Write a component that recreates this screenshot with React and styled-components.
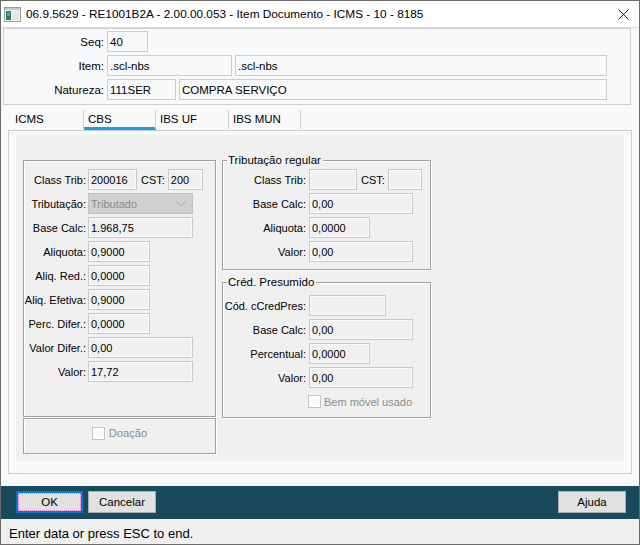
import styled, { createGlobalStyle } from "styled-components";

const GlobalStyle = createGlobalStyle`
    html, body {
        margin: 0;
        padding: 0;
        background: #ffffff;
    }
    body {
        font-family: "Liberation Sans", Arial, sans-serif;
        color: #000;
    }
`;

const Window = styled.div`
    width: 640px;
    height: 545px;
    box-sizing: border-box;
    border: 1px solid #6a6a6a;
    display: flex;
    flex-direction: column;
    background: #f8f9fb;
    overflow: hidden;
`;

const TitleBar = styled.div`
    height: 26px;
    flex-shrink: 0;
    background: #ffffff;
    border-bottom: 1px solid #dcdcdc;
    display: flex;
    align-items: center;
    padding: 0 10px 0 3px;
`;

const TitleText = styled.div`
    flex: 1;
    margin-left: 5px;
    font-size: 11.8px;
    color: #000;
    white-space: nowrap;
`;

const Main = styled.div`
    flex: 1;
    display: flex;
    flex-direction: column;
    padding: 0 7px 0 2px;
`;

const HeaderBox = styled.div`
    height: 77px;
    box-sizing: border-box;
    margin-right: 1px;
    border: 1px solid #cfcfcf;
    padding: 2px 0 4px 0;
    display: flex;
    flex-direction: column;
    gap: 3px;
`;

const HeaderRow = styled.div`
    display: flex;
    align-items: center;
    gap: 3px;
`;

const HeaderLabel = styled.div`
    width: 100px;
    text-align: right;
    font-size: 11.5px;
`;

const HeaderInput = styled.div`
    width: ${(p) => p.$w}px;
    height: 21px;
    box-sizing: border-box;
    border: 1px solid #cdcdcd;
    background: #f8f9fb;
    padding-left: 2px;
    font-size: 11.5px;
    display: flex;
    align-items: center;
`;

const TabRow = styled.div`
    height: 25px;
    display: flex;
    padding-left: 8px;
`;

const Tab = styled.div`
    width: ${(p) => p.$w}px;
    box-sizing: border-box;
    position: relative;
    padding: 8px 0 0 4px;
    font-size: 11.5px;
    box-shadow: ${(p) => (p.$active ? "inset 0 -3px 0 #179fe3" : "none")};

    &::after {
        content: "";
        position: absolute;
        right: 0;
        top: 5px;
        width: 1px;
        height: 19px;
        background: #d4d4d4;
    }
`;

const ContentBox = styled.div`
    height: 344px;
    box-sizing: border-box;
    margin-left: 5px;
    border: 1px solid #cfcfcf;
    padding: 4px 7px 12px 7px;
`;

const Panel = styled.div`
    height: 100%;
    background: #f0f0f0;
    display: flex;
    align-items: flex-start;
    gap: 6px;
    padding-left: 7px;
    font-size: 11px;
`;

const Column = styled.div`
    width: ${(p) => p.$w}px;
    margin-top: ${(p) => p.$top}px;
    display: flex;
    flex-direction: column;
`;

const EtchedBox = styled.div`
    box-sizing: border-box;
    height: ${(p) => p.$h}px;
    margin-top: ${(p) => p.$mt || 0}px;
    border: 1px solid #a0a0a0;
    box-shadow: inset 1px 1px 0 #ffffff, 1px 1px 0 #ffffff;
    padding: ${(p) => p.$pad || "0"};
    display: flex;
    flex-direction: column;
    gap: 3px;
`;

const CenterBox = styled(EtchedBox)`
    flex-direction: row;
    align-items: center;
    justify-content: center;
    gap: 4px;
    color: #8d8d8d;
    font-size: 11.2px;
`;

const Group = styled.fieldset`
    margin: ${(p) => p.$mt || 0}px 0 0 0;
    padding: ${(p) => p.$pt}px 0 ${(p) => p.$pb}px 0;
    border: 1px solid #a0a0a0;
    box-shadow: inset 1px 1px 0 #ffffff, 1px 1px 0 #ffffff;
    min-width: 0;
    display: flex;
    flex-direction: column;
    gap: 3px;
`;

const Legend = styled.legend`
    margin-left: 4px;
    padding: 0 2px 0 1px;
    font-size: 11.5px;
    line-height: 14px;
`;

const FieldRow = styled.div`
    display: flex;
    align-items: center;
    height: 21px;
`;

const FieldLabel = styled.div`
    width: ${(p) => p.$w}px;
    margin-right: ${(p) => p.$gap}px;
    text-align: right;
    white-space: nowrap;
`;

const InlineLabel = styled.div`
    margin: 0 3px 0 4px;
`;

const Field = styled.div`
    width: ${(p) => p.$w}px;
    height: 21px;
    box-sizing: border-box;
    border: 1px solid #c8c8c8;
    box-shadow: inset 0 0 0 1px #fbfbfb;
    background: #f0f0f0;
    padding-left: 2px;
    display: flex;
    align-items: center;
    white-space: nowrap;
`;

const Select = styled(Field)`
    background: #d0d0d0;
    border-color: #c2c2c2;
    box-shadow: none;
    color: #8a8a8a;
    justify-content: space-between;
    padding-right: 6px;
`;

const CheckRow = styled.div`
    display: flex;
    align-items: center;
    gap: ${(p) => p.$gap || 4}px;
    padding-left: ${(p) => p.$pl || 0}px;
    margin-top: ${(p) => p.$mt || 0}px;
    color: #8d8d8d;
    font-size: 11px;
`;

const CheckBox = styled.div`
    width: 13px;
    height: 13px;
    box-sizing: border-box;
    border: 1px solid #c6c6c6;
    background: #fcfcfc;
`;

const Spacer = styled.div`
    height: 12px;
`;

const ButtonBar = styled.div`
    height: 33px;
    flex-shrink: 0;
    box-sizing: border-box;
    background: #184a5b;
    display: flex;
    padding: 5px 13px 0 15px;
    gap: 5px;
`;

const Button = styled.button`
    width: ${(p) => p.$w}px;
    height: 22px;
    box-sizing: border-box;
    margin: 0;
    margin-left: ${(p) => (p.$right ? "auto" : "0")};
    padding: 0;
    background: #e1e1e1;
    border: 1px solid ${(p) => (p.$focus ? "#0078d7" : "#adadad")};
    box-shadow: ${(p) => (p.$focus ? "inset 0 0 0 1px #0078d7" : "none")};
    outline: ${(p) => (p.$focus ? "1px dotted #e079b4" : "none")};
    outline-offset: -3px;
    font-family: "Liberation Sans", Arial, sans-serif;
    font-size: 11.5px;
    color: #000;
`;

const StatusBar = styled.div`
    height: 25px;
    flex-shrink: 0;
    box-sizing: border-box;
    background: #f0f0f0;
    padding: 4px 0 0 8px;
    font-size: 13px;
    display: flex;
    align-items: center;
`;

const AppIcon = () => (
    <svg width="17" height="15" viewBox="0 0 17 15">
        <rect x="0.5" y="0.5" width="16" height="14" fill="#f4f4f4" stroke="#9c9c9c" />
        <rect x="1" y="1" width="15" height="2" fill="#c9c9c9" />
        <rect x="2" y="4" width="5" height="9" fill="#2d7a6e" />
        <rect x="3" y="5" width="3" height="4" fill="#4aa3b0" />
        <rect x="8" y="4" width="7" height="9" fill="#e6e6e6" />
    </svg>
);

const CloseIcon = () => (
    <svg width="11" height="11" viewBox="0 0 11 11">
        <path d="M0.5 0.5 L10.5 10.5 M10.5 0.5 L0.5 10.5" stroke="#222" strokeWidth="1" />
    </svg>
);

const Chevron = () => (
    <svg width="10" height="6" viewBox="0 0 10 6">
        <path d="M0.5 0.5 L5 5 L9.5 0.5" fill="none" stroke="#a8a8a8" strokeWidth="1" />
    </svg>
);

const tabs = [
    { label: "ICMS", w: 73 },
    { label: "CBS", w: 72, active: true },
    { label: "IBS UF", w: 73 },
    { label: "IBS MUN", w: 72 },
];

const leftRows = [
    { label: "Base Calc:", value: "1.968,75", w: 105 },
    { label: "Aliquota:", value: "0,9000", w: 62 },
    { label: "Aliq. Red.:", value: "0,0000", w: 62 },
    { label: "Aliq. Efetiva:", value: "0,9000", w: 62 },
    { label: "Perc. Difer.:", value: "0,0000", w: 62 },
    { label: "Valor Difer.:", value: "0,00", w: 105 },
    { label: "Valor:", value: "17,72", w: 105 },
];

const regularRows = [
    { label: "Base Calc:", value: "0,00", w: 104 },
    { label: "Aliquota:", value: "0,0000", w: 61 },
    { label: "Valor:", value: "0,00", w: 104 },
];

const presumidoRows = [
    { label: "Cód. cCredPres:", value: "", w: 77 },
    { label: "Base Calc:", value: "0,00", w: 104 },
    { label: "Percentual:", value: "0,0000", w: 61 },
    { label: "Valor:", value: "0,00", w: 104 },
];

const App = () => {
    return (
        <>
            <GlobalStyle />
            <Window>
                <TitleBar>
                    <AppIcon />
                    <TitleText>
                        06.9.5629 - RE1001B2A - 2.00.00.053 - Item Documento - ICMS - 10 - 8185
                    </TitleText>
                    <CloseIcon />
                </TitleBar>

                <Main>
                    <HeaderBox>
                        <HeaderRow>
                            <HeaderLabel>Seq:</HeaderLabel>
                            <HeaderInput $w={41}>40</HeaderInput>
                        </HeaderRow>
                        <HeaderRow>
                            <HeaderLabel>Item:</HeaderLabel>
                            <HeaderInput $w={125}>.scl-nbs</HeaderInput>
                            <HeaderInput $w={372}>.scl-nbs</HeaderInput>
                        </HeaderRow>
                        <HeaderRow>
                            <HeaderLabel>Natureza:</HeaderLabel>
                            <HeaderInput $w={69}>111SER</HeaderInput>
                            <HeaderInput $w={428}>COMPRA SERVIÇO</HeaderInput>
                        </HeaderRow>
                    </HeaderBox>

                    <TabRow>
                        {tabs.map((t) => (
                            <Tab key={t.label} $w={t.w} $active={t.active}>
                                {t.label}
                            </Tab>
                        ))}
                    </TabRow>

                    <ContentBox>
                        <Panel>
                            <Column $w={193} $top={25}>
                                <EtchedBox $h={257} $pad="8px 0 0 0">
                                    <FieldRow>
                                        <FieldLabel $w={62} $gap={2}>Class Trib:</FieldLabel>
                                        <Field $w={49}>200016</Field>
                                        <InlineLabel>CST:</InlineLabel>
                                        <Field $w={35}>200</Field>
                                    </FieldRow>
                                    <FieldRow>
                                        <FieldLabel $w={62} $gap={2}>Tributação:</FieldLabel>
                                        <Select $w={105}>
                                            Tributado
                                            <Chevron />
                                        </Select>
                                    </FieldRow>
                                    {leftRows.map((r) => (
                                        <FieldRow key={r.label}>
                                            <FieldLabel $w={62} $gap={2}>{r.label}</FieldLabel>
                                            <Field $w={r.w}>{r.value}</Field>
                                        </FieldRow>
                                    ))}
                                </EtchedBox>
                                <CenterBox $h={36} $mt={1} $pad="0 0 6px 0">
                                    <CheckBox />
                                    Doação
                                </CenterBox>
                            </Column>

                            <Column $w={209} $top={18}>
                                <Group $pt={2} $pb={7}>
                                    <Legend>Tributação regular</Legend>
                                    <FieldRow>
                                        <FieldLabel $w={83} $gap={3}>Class Trib:</FieldLabel>
                                        <Field $w={48} />
                                        <InlineLabel>CST:</InlineLabel>
                                        <Field $w={34} />
                                    </FieldRow>
                                    {regularRows.map((r) => (
                                        <FieldRow key={r.label}>
                                            <FieldLabel $w={83} $gap={3}>{r.label}</FieldLabel>
                                            <Field $w={r.w}>{r.value}</Field>
                                        </FieldRow>
                                    ))}
                                </Group>
                                <Group $mt={5} $pt={6} $pb={9}>
                                    <Legend>Créd. Presumido</Legend>
                                    {presumidoRows.map((r) => (
                                        <FieldRow key={r.label}>
                                            <FieldLabel $w={83} $gap={3}>{r.label}</FieldLabel>
                                            <Field $w={r.w}>{r.value}</Field>
                                        </FieldRow>
                                    ))}
                                    <CheckRow $pl={85} $gap={3} $mt={4}>
                                        <CheckBox />
                                        Bem móvel usado
                                    </CheckRow>
                                </Group>
                            </Column>
                        </Panel>
                    </ContentBox>
                    <Spacer />
                </Main>

                <ButtonBar>
                    <Button $w={67} $focus>OK</Button>
                    <Button $w={68}>Cancelar</Button>
                    <Button $w={68} $right>Ajuda</Button>
                </ButtonBar>

                <StatusBar>Enter data or press ESC to end.</StatusBar>
            </Window>
        </>
    );
};

export default App;
